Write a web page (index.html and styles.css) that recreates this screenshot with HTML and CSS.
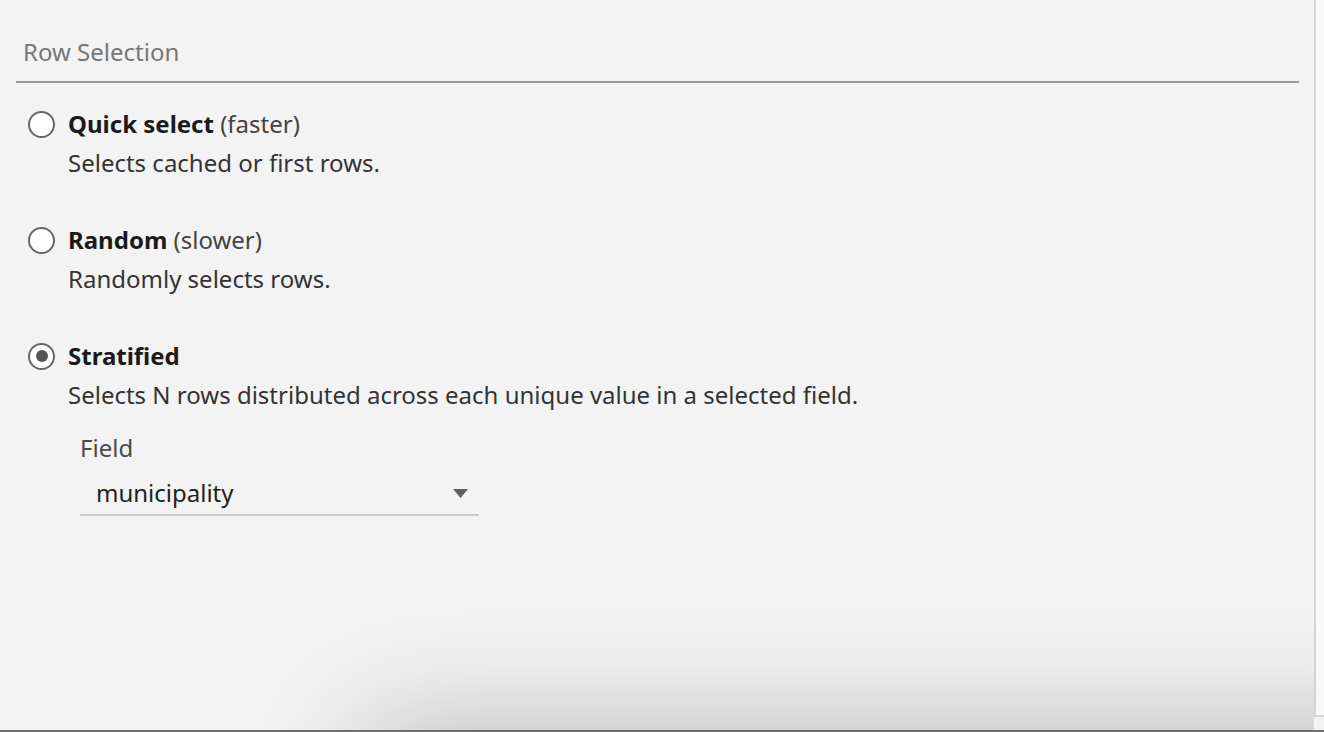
FILE: index.html
```html
<!DOCTYPE html>
<html>
<head>
<meta charset="utf-8">
<link rel="stylesheet" href="styles.css">
</head>
<body>
<div class="page">
  <div class="main">
    <div class="section-head">
      <div class="section-title">Row Selection</div>
    </div>
    <div class="options">
      <div class="option">
        <div class="option-title">
          <span class="radio"></span>
          <span><b>Quick select</b> (faster)</span>
        </div>
        <div class="option-desc">Selects cached or first rows.</div>
      </div>
      <div class="option">
        <div class="option-title">
          <span class="radio"></span>
          <span><b>Random</b> (slower)</span>
        </div>
        <div class="option-desc">Randomly selects rows.</div>
      </div>
      <div class="option">
        <div class="option-title">
          <span class="radio checked"></span>
          <span><b>Stratified</b></span>
        </div>
        <div class="option-desc">Selects N rows distributed across each unique value in a selected field.</div>
        <div class="field">
          <div class="field-label">Field</div>
          <div class="select">
            <span class="select-value">municipality</span>
            <svg class="select-arrow" width="15" height="9" viewBox="0 0 15 9"><path d="M0 0 H15 L7.5 9 Z" fill="#5f5f5f"/></svg>
          </div>
        </div>
      </div>
    </div>
    <div class="shadow"></div>
  </div>
  <div class="side"></div>
</div>
<div class="bottom-line"></div>
</body>
</html>
```
FILE: styles.css
```css
html, body {
  margin: 0;
  padding: 0;
}
body {
  background: #f3f3f3;
  font-family: "Noto Sans", "Liberation Sans", sans-serif;
  font-size: 24px;
  color: #2b2b2b;
  width: 1324px;
  height: 732px;
  overflow: hidden;
}
.page {
  display: flex;
  height: 730px;
}
.main {
  flex: 1;
  position: relative;
  overflow: hidden;
  background: #f3f3f3;
}
.side {
  width: 8px;
  height: 715px;
  background: #f8f8f8;
  border-left: 2px solid #d4d4d4;
  border-bottom: 2px solid #d4d4d4;
}
.bottom-line {
  height: 2px;
  background: #6e6e6e;
}
.section-head {
  margin: 0 15px 0 16px;
  padding: 38px 0 15px 7px;
  border-bottom: 2px solid #9b9b9b;
}
.section-title {
  line-height: 28px;
  color: #767676;
}
.options {
  padding: 27px 0 0 28px;
  display: flex;
  flex-direction: column;
  gap: 49px;
}
.option-title {
  display: flex;
  align-items: center;
  gap: 13px;
  line-height: 28px;
  color: #444;
}
.option-title b {
  color: #1a1a1a;
  font-weight: 700;
}
.radio {
  width: 23px;
  height: 23px;
  border: 2px solid #666;
  border-radius: 50%;
  background: #fff;
  display: flex;
  align-items: center;
  justify-content: center;
  flex-shrink: 0;
}
.radio.checked::after {
  content: "";
  width: 12px;
  height: 12px;
  border-radius: 50%;
  background: #575757;
}
.option-desc {
  margin: 11px 0 0 40px;
  line-height: 28px;
  color: #333;
}
.field {
  margin: 25px 0 0 52px;
  width: 399px;
}
.field-label {
  line-height: 28px;
  color: #4a4a4a;
}
.select {
  margin-top: 17px;
  display: flex;
  align-items: center;
  justify-content: space-between;
  padding: 0 11px 7px 16px;
  border-bottom: 2px solid #cacaca;
  line-height: 28px;
  color: #222;
}
.select-arrow {
  display: block;
}
.shadow {
  position: absolute;
  left: 360px;
  right: -120px;
  top: 730px;
  height: 120px;
  border-radius: 60px;
  box-shadow: 0 0 110px 10px rgba(0, 0, 0, 0.22);
}
```
